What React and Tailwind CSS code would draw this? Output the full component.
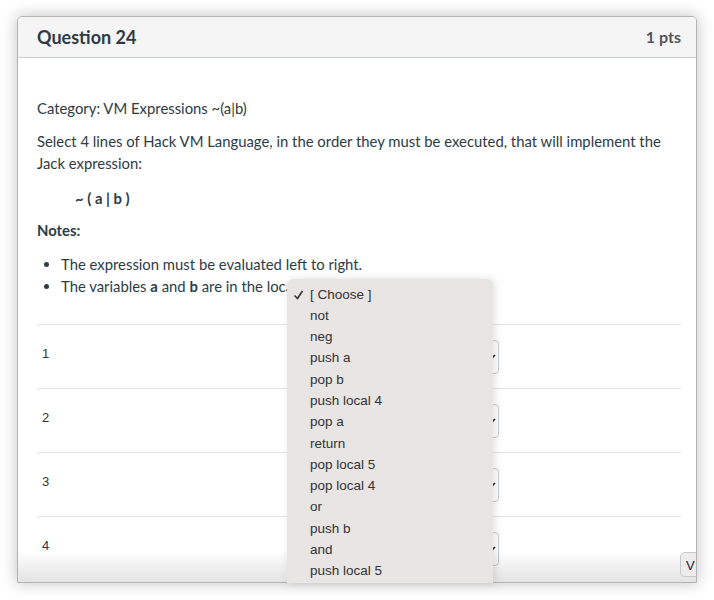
export default function App() {
  const options = [
    'not',
    'neg',
    'push a',
    'pop b',
    'push local 4',
    'pop a',
    'return',
    'pop local 5',
    'pop local 4',
    'or',
    'push b',
    'and',
    'push local 5',
  ];

  return (
    <div className="relative w-[714px] h-[600px] bg-white overflow-hidden font-['Lato','Liberation_Sans',sans-serif] text-[#2d3b45]">
      {/* question card */}
      <div className="relative ml-[17px] mt-[16px] w-[680px] h-[567px] border border-[#b4b4b4] rounded-t-[5px] bg-white overflow-hidden shadow-[0_0_16px_rgba(0,0,0,0.25)]">
        <div className="flex items-center justify-between h-[41px] pl-[19px] pr-[15px] bg-[#f5f5f5] border-b border-[#c7cdd1]">
          <h2 className="text-[18px] font-bold">Question 24</h2>
          <span className="text-[16px] font-bold text-[#555]">1 pts</span>
        </div>

        <div className="pl-[19px] pr-[15px] pt-[39px] text-[14.85px] leading-[22px]">
          <p>Category: VM Expressions ~(a|b)</p>
          <p className="mt-[11px]">
            Select 4 lines of Hack VM Language, in the order they must be executed, that will implement the Jack
            expression:
          </p>
          <p className="mt-[13px] pl-[38px] font-bold">~ ( a | b )</p>
          <p className="mt-[10px] font-bold">Notes:</p>
          <ul className="mt-[12px] pl-[24px] list-disc">
            <li>The expression must be evaluated left to right.</li>
            <li>
              The variables <b>a</b> and <b>b</b> are in the local segment.
            </li>
          </ul>

          <div className="mt-[27px]">
            {[1, 2, 3, 4].map((n) => (
              <div key={n} className="flex h-[64px] border-t border-[#e6e6e6] font-['Liberation_Sans',sans-serif]">
                <div className="w-[253px] pl-[5px] pt-[18px] text-[13px] text-[#333]">{n}</div>
                <div className="pt-[15px]">
                  <div className="relative w-[209px] h-[34px] border border-[#c7cdd1] rounded-[4px] bg-white">
                    <svg className="absolute right-[2px] top-[13px]" width="8" height="6" viewBox="0 0 8 6">
                      <path d="M1 1l3 3 3-3" fill="none" stroke="#222" strokeWidth="1.6" />
                    </svg>
                  </div>
                </div>
              </div>
            ))}
          </div>
        </div>

        {/* bottom fade */}
        <div className="absolute left-0 right-0 bottom-0 h-[32px] bg-linear-to-b from-transparent to-[rgba(0,0,0,0.11)]" />

        {/* partially visible button */}
        <div className="absolute right-[-6px] bottom-[5px] w-[22px] h-[25px] rounded-[5px] border border-[#c9c9c9] bg-[#eeecec] pl-[5px] pt-[3px] text-[13px] text-[#222] font-['Liberation_Sans',sans-serif]">
          V
        </div>
      </div>

      {/* native select popup */}
      <div className="absolute left-[287px] top-[279px] w-[206px] h-[304px] overflow-hidden rounded-t-[6px] bg-[#e9e5e5] pt-[5px] shadow-[2px_0_8px_rgba(0,0,0,0.12)] font-['Liberation_Sans',sans-serif] text-[13.5px] text-[#333]">
        <div className="flex items-center h-[21.3px]">
          <svg className="ml-[6px] mr-[6px]" width="11" height="10" viewBox="0 0 11 10">
            <path d="M1.5 5.5l3 3 5-7.5" fill="none" stroke="#333" strokeWidth="1.6" />
          </svg>
          <span>[ Choose ]</span>
        </div>
        {options.map((o) => (
          <div key={o} className="flex items-center h-[21.3px] pl-[23px]">
            {o}
          </div>
        ))}
      </div>
    </div>
  );
}
